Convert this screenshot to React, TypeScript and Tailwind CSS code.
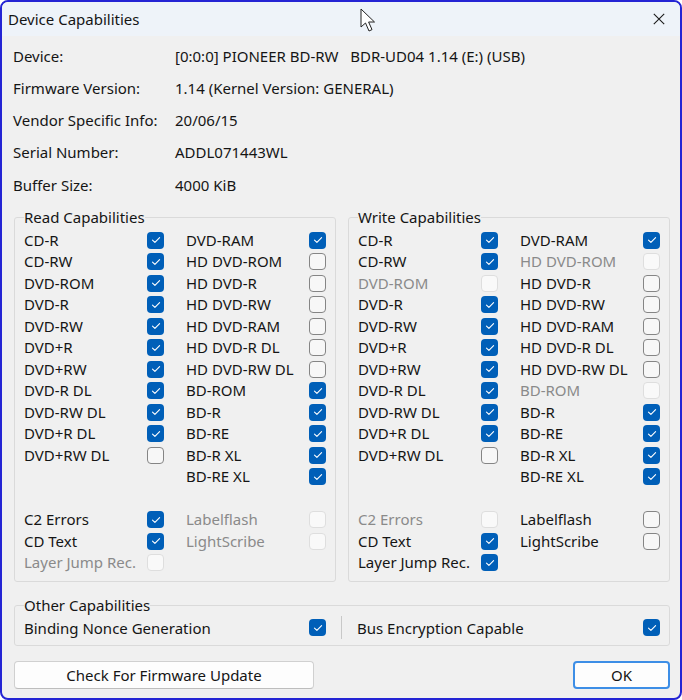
import type { ReactNode } from 'react'

type State = 'on' | 'off' | 'disabled'
type Cap = [string, State] | null

const FONT = { fontFamily: '"Noto Sans", "Open Sans", sans-serif' }

const info: [string, string][] = [
  ['Device:', '[0:0:0] PIONEER BD-RW   BDR-UD04 1.14 (E:) (USB)'],
  ['Firmware Version:', '1.14 (Kernel Version: GENERAL)'],
  ['Vendor Specific Info:', '20/06/15'],
  ['Serial Number:', 'ADDL071443WL'],
  ['Buffer Size:', '4000 KiB'],
]

const readRows: [Cap, Cap][] = [
  [['CD-R', 'on'], ['DVD-RAM', 'on']],
  [['CD-RW', 'on'], ['HD DVD-ROM', 'off']],
  [['DVD-ROM', 'on'], ['HD DVD-R', 'off']],
  [['DVD-R', 'on'], ['HD DVD-RW', 'off']],
  [['DVD-RW', 'on'], ['HD DVD-RAM', 'off']],
  [['DVD+R', 'on'], ['HD DVD-R DL', 'off']],
  [['DVD+RW', 'on'], ['HD DVD-RW DL', 'off']],
  [['DVD-R DL', 'on'], ['BD-ROM', 'on']],
  [['DVD-RW DL', 'on'], ['BD-R', 'on']],
  [['DVD+R DL', 'on'], ['BD-RE', 'on']],
  [['DVD+RW DL', 'off'], ['BD-R XL', 'on']],
  [null, ['BD-RE XL', 'on']],
  [null, null],
  [['C2 Errors', 'on'], ['Labelflash', 'disabled']],
  [['CD Text', 'on'], ['LightScribe', 'disabled']],
  [['Layer Jump Rec.', 'disabled'], null],
]

const writeRows: [Cap, Cap][] = [
  [['CD-R', 'on'], ['DVD-RAM', 'on']],
  [['CD-RW', 'on'], ['HD DVD-ROM', 'disabled']],
  [['DVD-ROM', 'disabled'], ['HD DVD-R', 'off']],
  [['DVD-R', 'on'], ['HD DVD-RW', 'off']],
  [['DVD-RW', 'on'], ['HD DVD-RAM', 'off']],
  [['DVD+R', 'on'], ['HD DVD-R DL', 'off']],
  [['DVD+RW', 'on'], ['HD DVD-RW DL', 'off']],
  [['DVD-R DL', 'on'], ['BD-ROM', 'disabled']],
  [['DVD-RW DL', 'on'], ['BD-R', 'on']],
  [['DVD+R DL', 'on'], ['BD-RE', 'on']],
  [['DVD+RW DL', 'off'], ['BD-R XL', 'on']],
  [null, ['BD-RE XL', 'on']],
  [null, null],
  [['C2 Errors', 'disabled'], ['Labelflash', 'off']],
  [['CD Text', 'on'], ['LightScribe', 'off']],
  [['Layer Jump Rec.', 'on'], null],
]

function CheckBox({ state }: { state: State }) {
  if (state === 'on') {
    return (
      <span className="flex h-[17px] w-[17px] shrink-0 items-center justify-center rounded-[4px] bg-[#005fb8]">
        <svg width="10" height="8" viewBox="0 0 10 8" fill="none">
          <path d="M1.5 4.2 L3.9 6.4 L8.6 1.6" stroke="white" strokeWidth="1.1" strokeLinecap="round" strokeLinejoin="round" />
        </svg>
      </span>
    )
  }
  if (state === 'disabled') {
    return <span className="h-[17px] w-[17px] shrink-0 rounded-[4px] border border-[#dedede] bg-[#f9f9f9]" />
  }
  return <span className="h-[17px] w-[17px] shrink-0 rounded-[4px] border border-[#858585] bg-[#f7f7f7]" />
}

function CapItem({ cap }: { cap: Cap }) {
  if (!cap) return <div />
  const [label, state] = cap
  return (
    <div className="flex items-center justify-between">
      <span className={state === 'disabled' ? 'text-[#8a8a8a]' : 'text-[#151515]'}>{label}</span>
      <CheckBox state={state} />
    </div>
  )
}

function Group({ title, children, className }: { title: string; children: ReactNode; className?: string }) {
  return (
    <fieldset className={`rounded-[3px] border border-[#dadada] px-[9px] ${className ?? ''}`}>
      <legend className="px-0 leading-[20px] text-[#151515]">{title}</legend>
      {children}
    </fieldset>
  )
}

function CapGroup({ title, rows }: { title: string; rows: [Cap, Cap][] }) {
  return (
    <Group title={title} className="pt-[2px] pb-[8px]">
      <div className="grid grid-cols-[140px_140px] auto-rows-[21.5px] gap-x-[22px]">
        {rows.map(([a, b], i) => (
          <div key={i} className="contents">
            <CapItem cap={a} />
            <CapItem cap={b} />
          </div>
        ))}
      </div>
    </Group>
  )
}

export default function App() {
  return (
    <div style={FONT} className="relative h-[700px] w-[682px] overflow-hidden rounded-[8px] border-2 border-[#2424d4] bg-[#f0f0f0] text-[15px]">
      {/* title bar */}
      <div className="flex h-[34px] items-center justify-between bg-[#eef3f9] pl-[6px] pr-[15px]">
        <span className="text-[15px] text-[#151515]">Device Capabilities</span>
        <svg width="12" height="12" viewBox="0 0 12 12">
          <path d="M0.8 0.8 L11.2 11.2 M11.2 0.8 L0.8 11.2" stroke="#1b1b1b" strokeWidth="1.1" />
        </svg>
      </div>

      {/* mouse pointer */}
      <svg className="absolute left-[358px] top-[6px]" width="16" height="26" viewBox="0 0 16 26">
        <path d="M1 1 L1 19 L5.5 15 L9 23 L12 21.6 L8.6 14 L14.5 14 Z" fill="white" stroke="#222" strokeWidth="1" strokeLinejoin="round" />
      </svg>

      <div className="pl-[11px] pt-[4px]">
        {info.map(([label, value]) => (
          <div key={label} className="flex h-[32.2px] items-center text-[#151515]">
            <span className="w-[162px] shrink-0">{label}</span>
            <span className="whitespace-pre">{value}</span>
          </div>
        ))}

        <div className="mt-[6.5px] grid grid-cols-[322px_322px] gap-x-[12px] pl-[1px]">
          <CapGroup title="Read Capabilities" rows={readRows} />
          <CapGroup title="Write Capabilities" rows={writeRows} />
        </div>

        <Group title="Other Capabilities" className="ml-[1px] mt-[13px] w-[656px] pt-[1px] pb-[6px]">
          <div className="flex h-[23px] items-center">
            <div className="w-[302px]">
              <CapItem cap={['Binding Nonce Generation', 'on']} />
            </div>
            <div className="mx-[15px] h-[23px] w-px bg-[#c8c8c8]" />
            <div className="w-[303px]">
              <CapItem cap={['Bus Encryption Capable', 'on']} />
            </div>
          </div>
        </Group>

        <div className="mt-[15px] flex w-[657px] justify-between pl-[1px]">
          <button className="h-[28px] w-[300px] rounded-[4px] border border-[#d0d0d0] border-b-[#bdbdbd] bg-[#fdfdfd] text-[#151515]">
            Check For Firmware Update
          </button>
          <button className="h-[28px] w-[97px] rounded-[4px] border-2 border-[#3d8ee6] bg-[#fdfdfd] text-[#151515]">
            OK
          </button>
        </div>
      </div>
    </div>
  )
}
